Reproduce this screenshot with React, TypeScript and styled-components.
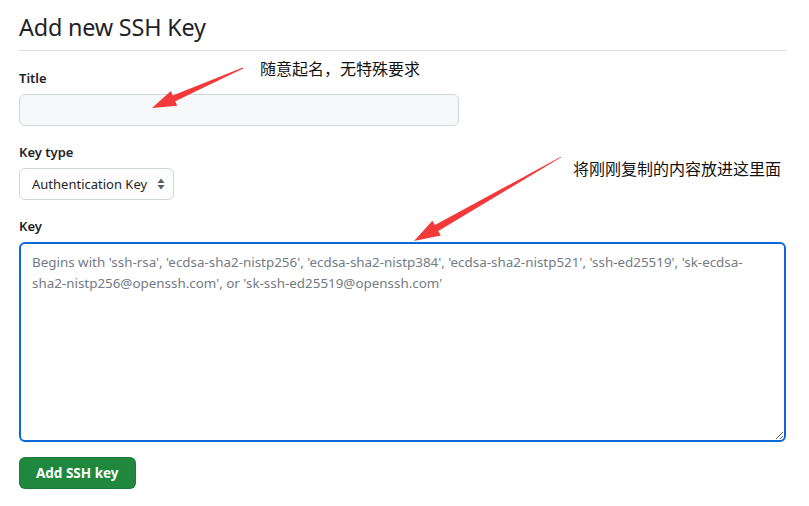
import React from 'react';
import styled, { createGlobalStyle } from 'styled-components';

const GlobalStyle = createGlobalStyle`
  html, body {
    margin: 0;
    padding: 0;
    background: #ffffff;
  }
  body {
    font-family: 'Noto Sans', 'Open Sans', 'Liberation Sans', sans-serif;
    color: #1f2328;
  }
`;

const Page = styled.div`
  position: relative;
  width: 809px;
  height: 506px;
  overflow: hidden;
  box-sizing: border-box;
  padding: 9px 23px 0 19px;
`;

const Subhead = styled.h2`
  margin: 0;
  padding-bottom: 5px;
  border-bottom: 1px solid #d8dee4;
  font-size: 23.4px;
  line-height: 36px;
  font-weight: 400;
  letter-spacing: -0.2px;
  color: #1f2328;
`;

const Form = styled.form`
  display: flex;
  flex-direction: column;
  padding-top: 17px;
`;

const Field = styled.div`
  display: flex;
  flex-direction: column;
  align-items: flex-start;
  margin-bottom: 16px;
`;

const Label = styled.label`
  font-size: 13px;
  line-height: 20px;
  font-weight: 600;
  margin-bottom: 6px;
`;

const TextInput = styled.input`
  box-sizing: border-box;
  width: 440px;
  height: 32px;
  padding: 5px 12px;
  font: inherit;
  font-size: 14px;
  background: #f6f8fa;
  border: 1px solid #d0d7de;
  border-radius: 6px;
  outline: none;
`;

const SelectBox = styled.div`
  box-sizing: border-box;
  display: flex;
  align-items: center;
  justify-content: space-between;
  width: 155px;
  height: 32px;
  padding: 0 8px 0 12px;
  font-size: 13px;
  background: #ffffff;
  border: 1px solid #d0d7de;
  border-radius: 6px;
  color: #1f2328;
`;

const Caret = styled.svg`
  width: 8px;
  height: 12px;
  fill: #57606a;
`;

const KeyArea = styled.textarea`
  box-sizing: border-box;
  width: 767px;
  height: 200px;
  padding: 8px 11px;
  font-family: inherit;
  font-size: 13.4px;
  line-height: 21px;
  border: 2px solid #0969da;
  border-radius: 6px;
  outline: none;
  resize: vertical;
  &::placeholder {
    color: #737b84;
  }
`;

const SubmitButton = styled.button`
  align-self: flex-start;
  box-sizing: border-box;
  height: 32px;
  margin-top: -1px;
  padding: 0 16px;
  white-space: nowrap;
  font-family: inherit;
  font-size: 13.5px;
  font-weight: 700;
  color: #ffffff;
  background: #1f883d;
  border: 1px solid rgba(31, 35, 40, 0.15);
  border-radius: 6px;
  cursor: pointer;
`;

const Note = styled.div<{ $x: number; $y: number }>`
  position: absolute;
  left: ${p => p.$x}px;
  top: ${p => p.$y}px;
  font-family: 'Noto Sans CJK SC', sans-serif;
  font-size: 16px;
  line-height: 20px;
  color: #111111;
  white-space: nowrap;
`;

const Overlay = styled.svg`
  position: absolute;
  left: 0;
  top: 0;
  pointer-events: none;
`;

type Pt = [number, number];

const arrowPoints = (tail: Pt, tip: Pt, head = 24, headHalf = 8, shaft = 3.2) => {
  const dx = tip[0] - tail[0];
  const dy = tip[1] - tail[1];
  const len = Math.hypot(dx, dy);
  const ux = dx / len;
  const uy = dy / len;
  const nx = -uy;
  const ny = ux;
  const bx = tip[0] - ux * head;
  const by = tip[1] - uy * head;
  const pts: Pt[] = [
    [tail[0] + nx * 0.4, tail[1] + ny * 0.4],
    [bx + nx * shaft, by + ny * shaft],
    [bx + nx * headHalf, by + ny * headHalf],
    tip,
    [bx - nx * headHalf, by - ny * headHalf],
    [bx - nx * shaft, by - ny * shaft],
    [tail[0] - nx * 0.4, tail[1] - ny * 0.4]
  ];
  return pts.map(p => `${p[0].toFixed(1)},${p[1].toFixed(1)}`).join(' ');
};

const placeholder =
  "Begins with 'ssh-rsa', 'ecdsa-sha2-nistp256', 'ecdsa-sha2-nistp384', 'ecdsa-sha2-nistp521', 'ssh-ed25519', 'sk-ecdsa-sha2-nistp256@openssh.com', or 'sk-ssh-ed25519@openssh.com'";

export default function App() {
  return (
    <>
      <GlobalStyle />
      <Page>
        <Subhead>Add new SSH Key</Subhead>
        <Form onSubmit={e => e.preventDefault()}>
          <Field>
            <Label>Title</Label>
            <TextInput type="text" />
          </Field>
          <Field>
            <Label>Key type</Label>
            <SelectBox>
              <span>Authentication Key</span>
              <Caret viewBox="0 0 8 12">
                <path d="M4 0.5 L7.5 5 H0.5 Z M4 11.5 L0.5 7 H7.5 Z" />
              </Caret>
            </SelectBox>
          </Field>
          <Field>
            <Label>Key</Label>
            <KeyArea placeholder={placeholder} />
          </Field>
          <SubmitButton type="submit">Add SSH key</SubmitButton>
        </Form>

        <Note $x={260} $y={58}>随意起名，无特殊要求</Note>
        <Note $x={573} $y={158}>将刚刚复制的内容放进这里面</Note>
        <Overlay width="809" height="506" viewBox="0 0 809 506">
          <polygon points={arrowPoints([243, 68], [152, 108])} fill="#f23a3a" />
          <polygon points={arrowPoints([561, 157], [414, 241], 26, 8.5, 3.4)} fill="#f23a3a" />
        </Overlay>
      </Page>
    </>
  );
}
